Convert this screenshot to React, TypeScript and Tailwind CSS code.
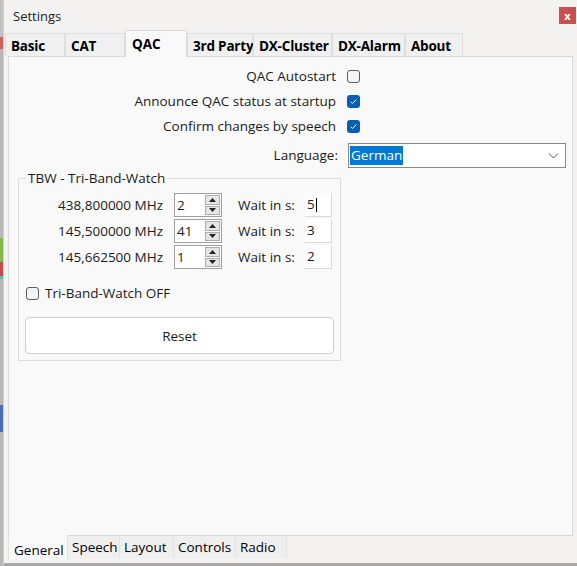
import React from 'react';

const topTabs = [
  { label: 'Basic', w: 60 },
  { label: 'CAT', w: 60 },
  { label: 'QAC', w: 62, active: true },
  { label: '3rd Party', w: 66 },
  { label: 'DX-Cluster', w: 79 },
  { label: 'DX-Alarm', w: 73 },
  { label: 'About', w: 58 },
];

const bottomTabs = [
  { label: 'General', w: 60, active: true },
  { label: 'Speech', w: 52 },
  { label: 'Layout', w: 54 },
  { label: 'Controls', w: 62 },
  { label: 'Radio', w: 51 },
];

const tbwRows = [
  { freq: '438,800000 MHz', val: '2', wait: '5', caret: true },
  { freq: '145,500000 MHz', val: '41', wait: '3' },
  { freq: '145,662500 MHz', val: '1', wait: '2' },
];

function Check({ checked }: { checked?: boolean }) {
  if (checked) {
    return (
      <span className="flex h-[13px] w-[13px] shrink-0 items-center justify-center rounded-[3px] bg-[#0a5fb4]">
        <svg width="9" height="9" viewBox="0 0 9 9">
          <path d="M1.8 4.8 L3.6 6.4 L7.2 2.6" fill="none" stroke="#ffffff" strokeWidth="1" />
        </svg>
      </span>
    );
  }
  return <span className="h-[13px] w-[13px] shrink-0 rounded-[3px] border border-[#5e5e5e] bg-[#f5f5f5]" />;
}

function Spin({ value }: { value: string }) {
  return (
    <div className="flex h-[24px] w-[48px] border border-[#a0a0a0] bg-white">
      <div className="flex flex-1 items-center pl-[2px] text-[#1a1a1a]">{value}</div>
      <div className="flex w-[16px] flex-col gap-[1px] py-[1px] pr-[1px]">
        <div className="flex flex-1 items-center justify-center border border-[#adadad] bg-[#e5e5e5]">
          <svg width="7" height="4" viewBox="0 0 7 4"><path d="M0 4 L3.5 0 L7 4 Z" fill="#222" /></svg>
        </div>
        <div className="flex flex-1 items-center justify-center border border-[#adadad] bg-[#e5e5e5]">
          <svg width="7" height="4" viewBox="0 0 7 4"><path d="M0 0 L3.5 4 L7 0 Z" fill="#222" /></svg>
        </div>
      </div>
    </div>
  );
}

export default function App() {
  return (
    <div
      className="flex h-[566px] w-[577px] overflow-hidden bg-[#f0f0f0] text-[#1b1b1b]"
      style={{ fontFamily: '"Open Sans", "Noto Sans", sans-serif' }}
    >
      {/* desktop strip behind the window */}
      <div className="flex w-[3px] flex-col bg-[#b8b8b8]">
        <div className="h-[37px] bg-[#c2c2c2]" />
        <div className="h-[12px] bg-[#d06060]" />
        <div className="h-[189px]" />
        <div className="h-[24px] bg-[#7fb84c]" />
        <div className="h-[14px] bg-[#c0504d]" />
        <div className="h-[3px] bg-[#5fb8b0]" />
        <div className="h-[126px]" />
        <div className="h-[27px] bg-[#4b6fb5]" />
      </div>

      <div className="flex flex-1 flex-col border-l border-[#cfcfcf] bg-[#f3f2f1]">
        {/* title bar */}
        <div className="flex h-[31px] items-start justify-between">
          <span className="pl-[9px] pt-[7px] text-[13px] text-[#222]">Settings</span>
          <div className="mr-[1px] mt-[7px] flex h-[17px] w-[17px] items-center justify-center bg-[#c75050] text-[11px] font-bold leading-none text-white">
            x
          </div>
        </div>

        {/* top tabs */}
        <div className="flex h-[25px] items-end pl-[1px]">
          {topTabs.map(t =>
            t.active ? (
              <div
                key={t.label}
                className="relative z-10 -mb-[1px] flex h-[27px] items-start whitespace-nowrap border border-b-0 border-[#dadada] bg-[#f9f9f9] pl-[6px] pt-[3px] text-[13.5px] font-bold text-black"
                style={{ width: t.w }}
              >
                {t.label}
              </div>
            ) : (
              <div
                key={t.label}
                className="flex h-[23px] items-center whitespace-nowrap border border-b-0 border-[#dedede] bg-[#f0f0f0] pl-[5px] pt-[2px] text-[13.5px] font-bold tracking-[-0.2px] text-black"
                style={{ width: t.w }}
              >
                {t.label}
              </div>
            )
          )}
        </div>

        {/* tab page */}
        <div className="ml-[4px] mr-[4px] flex h-[480px] flex-col border border-[#dadada] bg-[#f9f9f9] text-[13.5px]">
          <div className="flex flex-col gap-[8px] pt-[11px]">
            <div className="flex h-[17px] items-center justify-end gap-[11px] pr-[212px]">
              <span>QAC Autostart</span>
              <Check />
            </div>
            <div className="flex h-[17px] items-center justify-end gap-[11px] pr-[212px]">
              <span>Announce QAC status at startup</span>
              <Check checked />
            </div>
            <div className="flex h-[17px] items-center justify-end gap-[11px] pr-[212px]">
              <span>Confirm changes by speech</span>
              <Check checked />
            </div>
            <div className="flex items-center justify-end gap-[10px] pr-[6px]">
              <span>Language:</span>
              <div className="flex h-[25px] w-[218px] items-center justify-between border border-[#8a8a8a] bg-white pl-[1px] pr-[6px]">
                <span className="bg-[#0078d7] px-[1px] leading-[19px] text-white">German</span>
                <svg width="11" height="6" viewBox="0 0 11 6">
                  <path d="M1 0.5 L5.5 5 L10 0.5" fill="none" stroke="#555" strokeWidth="1" />
                </svg>
              </div>
            </div>
          </div>

          {/* group box */}
          <div className="relative ml-[9px] mt-[10px] w-[323px] border border-[#dcdcdc] px-[6px] pb-[6px] pt-[14px]">
            <span className="absolute -top-[10px] left-[7px] bg-[#f9f9f9] px-[2px] leading-[18px]">
              TBW - Tri-Band-Watch
            </span>
            <div className="flex flex-col gap-[2px]">
              {tbwRows.map(r => (
                <div key={r.freq} className="flex h-[24px] items-center">
                  <span className="w-[138px] whitespace-nowrap text-right">{r.freq}</span>
                  <div className="ml-[11px]">
                    <Spin value={r.val} />
                  </div>
                  <span className="ml-[16px] w-[67px] whitespace-nowrap">Wait in s:</span>
                  <div className="flex h-[24px] w-[27px] items-center border-b border-r border-[#dadada] bg-white pl-[2px]">
                    {r.wait}
                    {r.caret && <span className="ml-[1px] h-[14px] w-[1px] bg-black" />}
                  </div>
                </div>
              ))}
            </div>
            <div className="mt-[14px] flex items-center gap-[6px] pl-[1px]">
              <Check />
              <span>Tri-Band-Watch OFF</span>
            </div>
            <button className="mt-[14px] flex h-[37px] w-[309px] items-center justify-center rounded-[4px] border border-[#d0d0d0] bg-white text-[#1b1b1b]">
              Reset
            </button>
          </div>
        </div>

        {/* bottom tabs */}
        <div className="flex h-[24px] items-start pl-[4px] text-[13.5px]">
          {bottomTabs.map(t =>
            t.active ? (
              <div
                key={t.label}
                className="relative z-10 -mt-[1px] flex h-[25px] items-end whitespace-nowrap border-x border-[#e0e0e0] bg-[#f9f9f9] pl-[5px] text-black"
                style={{ width: t.w }}
              >
                {t.label}
              </div>
            ) : (
              <div
                key={t.label}
                className="flex h-[22px] items-center whitespace-nowrap border-r border-[#e2e2e2] bg-[#efefef] pl-[4px] pt-[1px] text-black"
                style={{ width: t.w }}
              >
                {t.label}
              </div>
            )
          )}
        </div>
        <div className="mt-auto h-[3px] bg-[#a8a8a8]" />
      </div>
    </div>
  );
}
